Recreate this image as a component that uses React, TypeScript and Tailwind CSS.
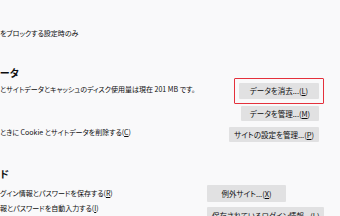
import React from 'react';

const jp = "font-['Noto_Sans_CJK_JP','Noto_Sans',sans-serif] [font-feature-settings:'palt']";

function Btn({ children, className = '' }: { children: React.ReactNode; className?: string }) {
    return (
        <button
            type="button"
            className={`relative shrink-0 flex items-center justify-center px-[5px] bg-[#e1e1e2] text-[7.5px] leading-none rounded-[1px] whitespace-nowrap ${className}`}
        >
            {children}
        </button>
    );
}

export default function App() {
    return (
        <div className={`w-[340px] h-[216px] overflow-hidden bg-[#f9f9fa] text-[#0c0c0d] text-[7px] ${jp}`}>
            <div className="h-[27px]" />
            <p className="h-[13px] leading-[13px] whitespace-nowrap">をブロックする設定時のみ</p>

            <h2 className="mt-[26px] h-[14px] leading-[14px] text-[10px] font-bold">ータ</h2>

            <div className="flex pr-[21px] mt-[3px]">
                <div className="flex flex-col">
                    <p className="leading-[13px] whitespace-nowrap">
                        とサイトデータとキャッシュのディスク使用量は現在 201 MB です。
                    </p>
                    <p className="mt-[30px] leading-[13px] whitespace-nowrap">
                        ときに Cookie とサイトデータを削除する(<u>C</u>)
                    </p>
                </div>
                <div className="ml-auto flex flex-col items-end">
                    <Btn className="h-[16px] min-w-[80px]">
                        データを消去...(<u>L</u>)
                        <span className="absolute -inset-x-[5px] -inset-y-[5px] border-[1.5px] border-[#e4303b] rounded-[1px]" />
                    </Btn>
                    <Btn className="mt-[7px] h-[15px] min-w-[78px]">データを管理...(<u>M</u>)</Btn>
                    <Btn className="mt-[6px] h-[15px] min-w-[86px]">サイトの設定を管理...(<u>P</u>)</Btn>
                </div>
            </div>

            <h2 className="mt-[24.5px] h-[14px] leading-[14px] text-[10px] font-bold">ド</h2>

            <div className="flex mt-[4.5px]">
                <div className="flex-1 flex flex-col">
                    <p className="mt-[1.5px] leading-[13px] whitespace-nowrap">
                        グイン情報とパスワードを保存する(<u>R</u>)
                    </p>
                    <p className="mt-[2.5px] leading-[13px] whitespace-nowrap">
                        報とパスワードを自動入力する(<u>I</u>)
                    </p>
                </div>
                <div className="w-[133px] flex flex-col items-start">
                    <Btn className="h-[17px] min-w-[79px]">例外サイト...(<u>X</u>)</Btn>
                    <Btn className="mt-[5px] h-[17px] min-w-[108px]">保存されているログイン情報...(<u>L</u>)</Btn>
                </div>
            </div>
        </div>
    );
}
